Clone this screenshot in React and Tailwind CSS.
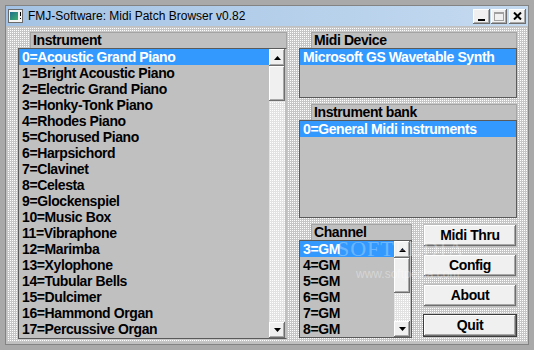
import React from 'react';

const instruments = [
  'Acoustic Grand Piano',
  'Bright Acoustic Piano',
  'Electric Grand Piano',
  'Honky-Tonk Piano',
  'Rhodes Piano',
  'Chorused Piano',
  'Harpsichord',
  'Clavinet',
  'Celesta',
  'Glockenspiel',
  'Music Box',
  'Vibraphone',
  'Marimba',
  'Xylophone',
  'Tubular Bells',
  'Dulcimer',
  'Hammond Organ',
  'Percussive Organ',
];

const channels = [3, 4, 5, 6, 7, 8];

const DITHER =
  'bg-white bg-[image:linear-gradient(90deg,#c6c6c6_1px,transparent_1px),linear-gradient(#c6c6c6_1px,transparent_1px)] bg-[length:2px_2px]';
const TRACK =
  'bg-white bg-[image:linear-gradient(90deg,#e2e2e2_1px,transparent_1px),linear-gradient(#e2e2e2_1px,transparent_1px)] bg-[length:2px_2px]';
const RAISED =
  'bg-[#f0f0f0] shadow-[inset_-1px_-1px_0_#6e6e6e,inset_1px_1px_0_#ffffff,inset_-2px_-2px_0_#a8a8a8]';
const BOLD = 'text-[14px] font-bold tracking-[-0.4px]';

function Arrow({ down }) {
  return (
    <svg width="7" height="4" viewBox="0 0 7 4" className={down ? 'rotate-180' : ''}>
      <path d="M3.5 0 L7 4 L0 4 Z" fill="#000" />
    </svg>
  );
}

function Scrollbar() {
  return (
    <div className="flex w-[16px] flex-col">
      <div className={`flex h-[17px] items-center justify-center ${RAISED}`}>
        <Arrow />
      </div>
      <div className={`h-[35px] ${RAISED}`} />
      <div className={`flex-1 ${TRACK}`} />
      <div className={`flex h-[16px] items-center justify-center ${RAISED}`}>
        <Arrow down />
      </div>
    </div>
  );
}

function Header({ children, className = '' }) {
  return (
    <div
      className={`ml-[12px] h-[16px] border border-b-0 border-[#a4a4a4] bg-[#c0c0c0] pl-[2px] leading-[15px] ${BOLD} ${className}`}
    >
      {children}
    </div>
  );
}

function Row({ selected, children }) {
  return (
    <div
      className={`h-[16px] whitespace-nowrap pl-[3px] leading-[16px] ${BOLD} ${
        selected ? 'bg-[#3399ff] text-white' : 'text-black'
      }`}
    >
      {children}
    </div>
  );
}

function Button({ children, primary }) {
  return (
    <div
      className={`flex h-[23px] items-center justify-center ${BOLD} ${RAISED} ${
        primary ? 'border border-[#3c3c3c]' : 'border border-[#bdbdbd]'
      }`}
    >
      {children}
    </div>
  );
}

function AppIcon() {
  return (
    <svg width="15" height="14" viewBox="0 0 15 14">
      <rect x="0.5" y="0.5" width="14" height="13" fill="#f4f4f4" stroke="#6a6a6a" />
      <defs>
        <linearGradient id="ig" x1="0" y1="0" x2="1" y2="1">
          <stop offset="0" stopColor="#1f6f8f" />
          <stop offset="1" stopColor="#3fb06a" />
        </linearGradient>
      </defs>
      <rect x="2" y="3" width="8" height="8" fill="url(#ig)" />
      <rect x="12" y="3" width="1" height="4" fill="#000" />
      <rect x="12" y="9" width="1" height="1" fill="#000" />
    </svg>
  );
}

export default function App() {
  return (
    <div
      className="h-[350px] w-[534px] bg-[#a9a9a9] p-[5px]"
      style={{ fontFamily: '"Liberation Sans", Arial, sans-serif' }}
    >
      <div className="flex h-[340px] w-[524px] flex-col border border-[#838383] bg-[#c0c0c0]">
        {/* title bar */}
        <div className="flex h-[20px] items-center bg-gradient-to-r from-[#a4c3e4] to-[#c4daf0] pl-[2px] pr-[2px]">
          <AppIcon />
          <span className="ml-[5px] text-[12px] leading-none text-black">
            FMJ-Software: Midi Patch Browser v0.82
          </span>
          <div className="ml-auto flex items-center">
            <div className={`flex h-[15px] w-[17px] items-end justify-center pb-[3px] ${RAISED}`}>
              <div className="h-[2px] w-[7px] bg-black" />
            </div>
            <div className={`ml-[1px] flex h-[15px] w-[16px] items-center justify-center ${RAISED}`}>
              <div className="h-[9px] w-[10px] border border-t-2 border-[#a0a0a0]" />
            </div>
            <div className={`ml-[2px] flex h-[15px] w-[17px] items-center justify-center ${RAISED}`}>
              <svg width="9" height="8" viewBox="0 0 9 8">
                <path d="M1 0.5 L8 7.5 M8 0.5 L1 7.5" stroke="#000" strokeWidth="2" />
              </svg>
            </div>
          </div>
        </div>

        {/* client */}
        <div className={`relative mx-[1px] mb-[2px] mt-[1px] flex flex-1 pl-[11px] pt-[5px] ${DITHER}`}>
          {/* instrument list */}
          <div className="flex w-[269px] flex-col">
            <Header>Instrument</Header>
            <div className="flex h-[291px] border border-r-[#c0c0c0] border-[#5a5a5a] bg-[#c0c0c0]">
              <div className="flex-1">
                {instruments.map((name, i) => (
                  <Row key={name} selected={i === 0}>
                    {i}={name}
                  </Row>
                ))}
              </div>
              <Scrollbar />
              <div className="w-[1px]" />
            </div>
          </div>

          {/* right side */}
          <div className="ml-[12px] flex w-[218px] flex-col">
            <Header>Midi Device</Header>
            <div className="h-[50px] border border-[#5a5a5a] bg-[#c0c0c0]">
              <Row selected>Microsoft GS Wavetable Synth</Row>
            </div>

            <Header className="mt-[6px]">Instrument bank</Header>
            <div className="h-[98px] border border-[#5a5a5a] bg-[#c0c0c0]">
              <Row selected>0=General Midi instruments</Row>
            </div>

            <div className="mt-[6px] flex">
              <div className="flex w-[113px] flex-col">
                <Header>Channel</Header>
                <div className="flex h-[98px] border border-[#5a5a5a] bg-[#c0c0c0]">
                  <div className="flex-1">
                    {channels.map((c, i) => (
                      <Row key={c} selected={i === 0}>
                        {c}=GM
                      </Row>
                    ))}
                  </div>
                  <Scrollbar />
                  <div className="w-[1px]" />
                </div>
              </div>
              <div className="ml-[11px] flex w-[94px] flex-col gap-[7px]">
                <Button>Midi Thru</Button>
                <Button>Config</Button>
                <Button>About</Button>
                <Button primary>Quit</Button>
              </div>
            </div>
          </div>

          {/* watermark */}
          <div
            className="pointer-events-none absolute left-[330px] top-[205px] text-[22px] tracking-[1px] text-white/30"
            style={{ fontFamily: '"Liberation Serif", serif' }}
          >
            SOFTPEDIA
          </div>
          <div className="pointer-events-none absolute left-[349px] top-[238px] text-[12px] text-white/35">
            www.softpedia.com
          </div>
        </div>
      </div>
    </div>
  );
}
